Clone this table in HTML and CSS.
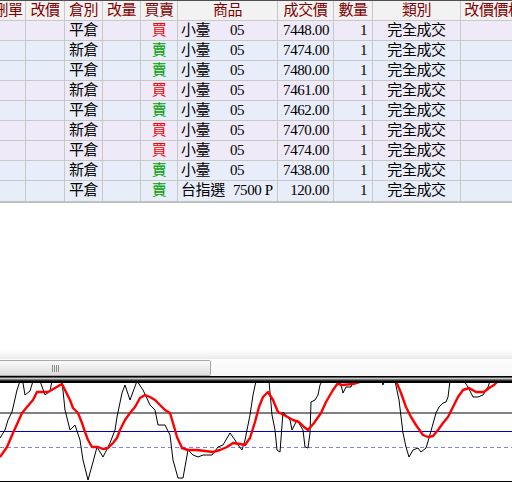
FILE: index.html
```html
<!DOCTYPE html>
<html>
<head>
<meta charset="utf-8">
<link rel="stylesheet" href="styles.css">
</head>
<body>
<div class="page">
  <div class="grid-view">
    <div class="grid-inner">
      <div class="row head">
        <div class="c">刪單</div><div class="c">改價</div><div class="c">倉別</div><div class="c">改量</div><div class="c">買賣</div><div class="c">商品</div><div class="c">成交價</div><div class="c">數量</div><div class="c">類別</div><div class="c">改價價格</div>
      </div>
      <div class="row buy"><div class="c"></div><div class="c"></div><div class="c">平倉</div><div class="c"></div><div class="c side-b">買</div><div class="c prod"><span class="pn">小臺</span>05</div><div class="c num">7448.00</div><div class="c qty">1</div><div class="c">完全成交</div><div class="c"></div></div>
      <div class="row sell"><div class="c"></div><div class="c"></div><div class="c">新倉</div><div class="c"></div><div class="c side-s">賣</div><div class="c prod"><span class="pn">小臺</span>05</div><div class="c num">7474.00</div><div class="c qty">1</div><div class="c">完全成交</div><div class="c"></div></div>
      <div class="row sell"><div class="c"></div><div class="c"></div><div class="c">平倉</div><div class="c"></div><div class="c side-s">賣</div><div class="c prod"><span class="pn">小臺</span>05</div><div class="c num">7480.00</div><div class="c qty">1</div><div class="c">完全成交</div><div class="c"></div></div>
      <div class="row buy"><div class="c"></div><div class="c"></div><div class="c">新倉</div><div class="c"></div><div class="c side-b">買</div><div class="c prod"><span class="pn">小臺</span>05</div><div class="c num">7461.00</div><div class="c qty">1</div><div class="c">完全成交</div><div class="c"></div></div>
      <div class="row sell"><div class="c"></div><div class="c"></div><div class="c">平倉</div><div class="c"></div><div class="c side-s">賣</div><div class="c prod"><span class="pn">小臺</span>05</div><div class="c num">7462.00</div><div class="c qty">1</div><div class="c">完全成交</div><div class="c"></div></div>
      <div class="row buy"><div class="c"></div><div class="c"></div><div class="c">新倉</div><div class="c"></div><div class="c side-b">買</div><div class="c prod"><span class="pn">小臺</span>05</div><div class="c num">7470.00</div><div class="c qty">1</div><div class="c">完全成交</div><div class="c"></div></div>
      <div class="row buy"><div class="c"></div><div class="c"></div><div class="c">平倉</div><div class="c"></div><div class="c side-b">買</div><div class="c prod"><span class="pn">小臺</span>05</div><div class="c num">7474.00</div><div class="c qty">1</div><div class="c">完全成交</div><div class="c"></div></div>
      <div class="row sell"><div class="c"></div><div class="c"></div><div class="c">新倉</div><div class="c"></div><div class="c side-s">賣</div><div class="c prod"><span class="pn">小臺</span>05</div><div class="c num">7438.00</div><div class="c qty">1</div><div class="c">完全成交</div><div class="c"></div></div>
      <div class="row sell last"><div class="c"></div><div class="c"></div><div class="c">平倉</div><div class="c"></div><div class="c side-s">賣</div><div class="c prod"><span class="pn opt">台指選</span>7500 P</div><div class="c num">120.00</div><div class="c qty">1</div><div class="c">完全成交</div><div class="c"></div></div>
    </div>
  </div>
  <div class="blank"></div>
  <div class="hscroll">
    <div class="hs-top"></div>
    <div class="hs-bar">
      <div class="thumb"><span class="grip"></span></div>
      <div class="track"></div>
    </div>
  </div>
  <svg class="chart" width="512" height="106" viewBox="0 376 512 106">
    <defs>
      <clipPath id="plot"><rect x="0" y="383" width="512" height="98"/></clipPath>
    </defs>
    <rect x="0" y="376" width="512" height="1" fill="#000"/>
    <rect x="0" y="377" width="512" height="1" fill="#5a5a5a"/>
    <rect x="0" y="378" width="512" height="1" fill="#c8c8c8"/>
    <rect x="0" y="379" width="512" height="1" fill="#7a7a7a"/>
    <rect x="0" y="380" width="512" height="1" fill="#303030"/>
    <rect x="0" y="381" width="512" height="2" fill="#000"/>
    <rect x="0" y="481" width="512" height="1" fill="#000"/>
    <rect x="0" y="412" width="512" height="2" fill="#808080"/>
    <rect x="0" y="431" width="512" height="1" fill="#0000c8"/>
    <line x1="0" y1="447.5" x2="512" y2="447.5" stroke="#8080ff" stroke-width="1" stroke-dasharray="4 3"/>
    <g clip-path="url(#plot)" fill="none">
      <polyline stroke="#000" stroke-width="1" points="0,438 5,430 8,420 12,412 17,390 20,381 23,383 25,395 30,391 33,381 40,381 45,395 50,391 52,381 62,381 65,410 70,430 75,425 80,440 83,460 88,480 93,462 97,447 103,457 110,443 115,430 117,417 122,393 125,385 130,400 137,381 143,390 150,405 155,410 158,425 165,425 170,435 173,460 178,478 183,478 188,450 193,455 198,457 203,455 212,455 218,447 223,445 230,433 235,440 238,445 242,450 245,440 250,415 253,395 256,381 269,381 272,415 275,430 277,450 280,452 283,412 290,420 292,430 297,420 303,430 305,447 308,448 310,433 311,402 315,400 318,395 320,385 322,381 340,381 343,393 346,387 351,387 353,381 382,381 383,385 384,381 395,381 399,400 403,433 406,447 409,457 413,450 418,448 421,452 426,448 429,438 436,413 439,407 443,403 446,402 448,397 450,381 464,381 468,387 473,397 478,397 483,395 488,387 490,381 512,381"/>
      <polyline stroke="#ff0000" stroke-width="2.4" stroke-linejoin="round" points="0,457 7,447 13,433 18,422 22,413 27,407 33,400 37,392 48,392 55,388 62,384 65,390 70,400 73,408 78,413 82,423 85,432 88,440 92,447 98,447 103,449 108,448 113,443 117,438 120,430 125,420 130,413 135,407 140,398 145,395 150,397 155,400 160,405 165,410 170,413 173,423 177,437 182,448 188,450 197,450 205,451 213,452 220,450 227,447 233,443 240,444 245,445 250,438 255,422 259,407 263,397 268,392 273,400 278,412 284,415 293,420 299,422 304,427 308,430 314,423 321,413 326,402 333,390 338,383 341,385 353,384 363,381 396,381 401,393 406,407 411,417 416,425 423,435 428,437 433,436 438,430 443,423 448,417 453,407 458,397 463,390 469,388 476,392 484,392 489,388 494,385 498,381 512,379"/>
    </g>
  </svg>
</div>
</body>
</html>
```

FILE: styles.css
```css
html, body {
  margin: 0;
  padding: 0;
  background: #ffffff;
}
.page {
  width: 512px;
  height: 482px;
  overflow: hidden;
  display: flex;
  flex-direction: column;
}
.grid-view {
  width: 512px;
  overflow: hidden;
  flex: none;
  border-bottom: 2px solid #c0c0c0;
}
.grid-inner {
  margin-left: -9px;
  width: 536px;
  font-family: "Liberation Serif", "Noto Sans CJK TC", serif;
  font-size: 15px;
  letter-spacing: -0.4px;
  color: #000;
}
.row {
  display: grid;
  grid-template-columns: 35px 39px 38px 38px 37px 100px 56px 39px 88px 66px;
  height: 20px;
  box-sizing: border-box;
  border-bottom: 1px solid #c8c8c8;
}
.row.last {
  border-bottom: none;
}
.row.head {
  height: 21px;
  border-top: 1px solid #505050;
  background: #f2f2f2;
  color: #800000;
}
.row.buy {
  background: #efeaf7;
}
.row.sell {
  background: #e8eef9;
}
.c {
  box-sizing: border-box;
  border-right: 1px solid #c8c8c8;
  line-height: 19px;
  text-align: center;
  white-space: nowrap;
  overflow: hidden;
}
.side-b {
  color: #ff0000;
}
.side-s {
  color: #00a000;
}
.prod {
  text-align: left;
  padding-left: 3px;
}
.pn {
  display: inline-block;
  width: 49px;
}
.pn.opt {
  width: 52px;
}
.num {
  text-align: right;
  padding-right: 4px;
}
.qty {
  text-align: right;
  padding-right: 5px;
}
.blank {
  flex: 1;
}
.hscroll {
  flex: none;
  height: 26px;
  display: flex;
  flex-direction: column;
}
.hs-top {
  height: 9px;
  background: linear-gradient(#ffffff, #ebebeb);
}
.hs-bar {
  height: 17px;
  display: flex;
  background: #fbfbfb;
}
.thumb {
  width: 211px;
  box-sizing: border-box;
  margin-top: 1px;
  height: 16px;
  border: 1px solid #a8a8a8;
  border-left: none;
  border-radius: 0 2px 2px 0;
  background: linear-gradient(#fbfbfb, #ececec 50%, #dcdcdc);
  display: flex;
  align-items: center;
}
.grip {
  margin-left: 52px;
  width: 7px;
  height: 7px;
  background: repeating-linear-gradient(90deg, #8c8c8c 0 1px, transparent 1px 2px);
}
.track {
  flex: 1;
  background: linear-gradient(#fdfdfd, #f6f6f6);
}
.chart {
  display: block;
  flex: none;
}
```
